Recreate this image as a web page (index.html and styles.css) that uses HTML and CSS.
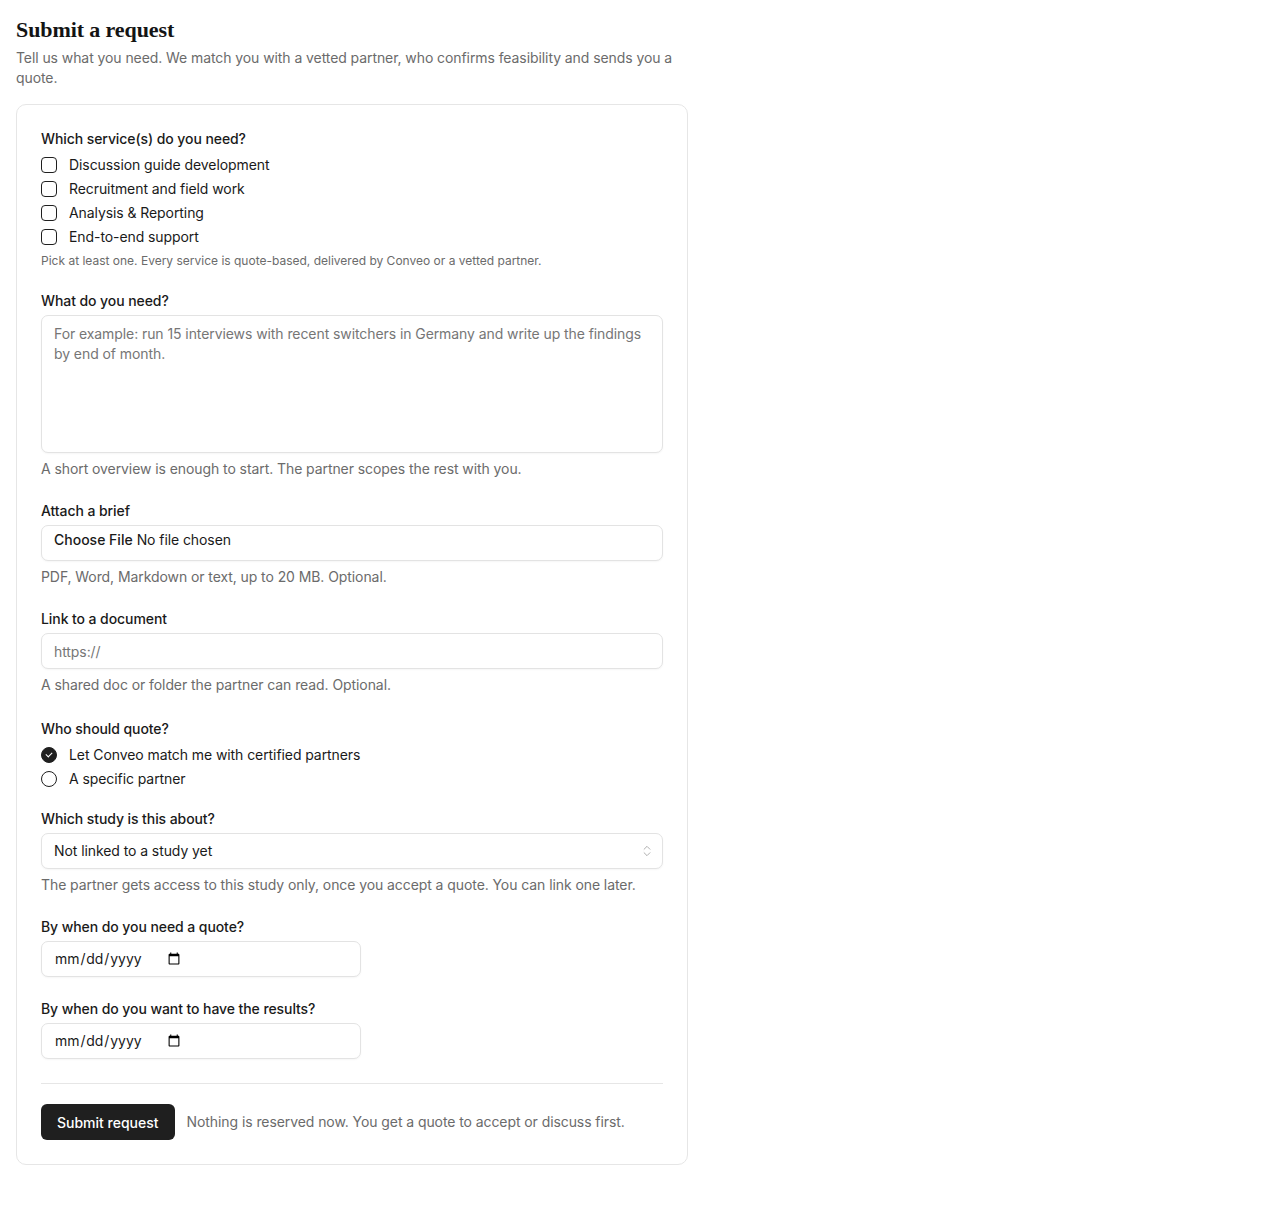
FILE: index.html
```html
<!DOCTYPE html>
<html lang="en">
<head>
<meta charset="utf-8">
<title>Submit a request</title>
<link rel="stylesheet" href="styles.css">
</head>
<body>
<main class="page">
  <h1 class="title">Submit a request</h1>
  <p class="lead">Tell us what you need. We match you with a vetted partner, who confirms feasibility and sends you a quote.</p>

  <form class="card">
    <fieldset class="field field-services">
      <legend class="label">Which service(s) do you need?</legend>
      <div class="options">
        <label class="option"><input type="checkbox" class="box"><span>Discussion guide development</span></label>
        <label class="option"><input type="checkbox" class="box"><span>Recruitment and field work</span></label>
        <label class="option"><input type="checkbox" class="box"><span>Analysis &amp; Reporting</span></label>
        <label class="option"><input type="checkbox" class="box"><span>End-to-end support</span></label>
      </div>
      <p class="hint hint-small">Pick at least one. Every service is quote-based, delivered by Conveo or a vetted partner.</p>
    </fieldset>

    <div class="field">
      <label class="label" for="need">What do you need?</label>
      <textarea id="need" class="control textarea" placeholder="For example: run 15 interviews with recent switchers in Germany and write up the findings by end of month."></textarea>
      <p class="hint">A short overview is enough to start. The partner scopes the rest with you.</p>
    </div>

    <div class="field">
      <label class="label" for="brief">Attach a brief</label>
      <input id="brief" type="file" class="control file">
      <p class="hint">PDF, Word, Markdown or text, up to 20 MB. Optional.</p>
    </div>

    <div class="field field-link">
      <label class="label" for="link">Link to a document</label>
      <input id="link" type="url" class="control" placeholder="https://">
      <p class="hint">A shared doc or folder the partner can read. Optional.</p>
    </div>

    <fieldset class="field field-quote">
      <legend class="label">Who should quote?</legend>
      <div class="options options-radio">
        <label class="option"><input type="radio" name="who" class="radio" checked><span>Let Conveo match me with certified partners</span></label>
        <label class="option"><input type="radio" name="who" class="radio"><span>A specific partner</span></label>
      </div>
    </fieldset>

    <div class="field">
      <label class="label" for="study">Which study is this about?</label>
      <div class="select-wrap">
        <select id="study" class="control select">
          <option>Not linked to a study yet</option>
        </select>
        <svg class="select-icon" width="14" height="14" viewBox="0 0 24 24" fill="none" stroke="currentColor" stroke-width="1.5" stroke-linecap="round" stroke-linejoin="round"><path d="m7 15 5 5 5-5"/><path d="m7 9 5-5 5 5"/></svg>
      </div>
      <p class="hint">The partner gets access to this study only, once you accept a quote. You can link one later.</p>
    </div>

    <div class="field">
      <label class="label" for="qdate">By when do you need a quote?</label>
      <input id="qdate" type="date" class="control date">
    </div>

    <div class="field field-last">
      <label class="label" for="rdate">By when do you want to have the results?</label>
      <input id="rdate" type="date" class="control date">
    </div>

    <div class="actions">
      <button type="button" class="submit">Submit request</button>
      <p class="note">Nothing is reserved now. You get a quote to accept or discuss first.</p>
    </div>
  </form>
</main>
</body>
</html>
```

FILE: styles.css
```css
* { box-sizing: border-box; }

html, body {
  margin: 0;
  padding: 0;
  background: #ffffff;
}

body {
  font-family: Inter, "Noto Sans", "Liberation Sans", sans-serif;
  font-size: 14px;
  line-height: 20px;
  letter-spacing: -0.08px;
  color: #1a1a1a;
}

.page {
  max-width: 704px;
  padding: 16px;
}

.title {
  margin: 0;
  font-family: "Liberation Serif", "DejaVu Serif", serif;
  font-size: 22px;
  line-height: 28px;
  font-weight: 700;
  letter-spacing: -0.1px;
  color: #141414;
}

.lead {
  margin: 4px 0 16px;
  color: #6b6b6b;
  font-size: 14px;
  line-height: 20px;
}

.card {
  border: 1px solid #e6e6e6;
  border-radius: 10px;
  padding: 24px;
  display: flex;
  flex-direction: column;
}

.field {
  border: 0;
  margin: 0 0 22px;
  padding: 0;
  min-width: 0;
  display: flex;
  flex-direction: column;
}

.field-link { margin-bottom: 24px; }
.field-quote { margin-bottom: 18px; }
.field-last { margin-bottom: 24px; }

.label {
  display: block;
  padding: 0;
  font-weight: 500;
  font-size: 14px;
  line-height: 20px;
  color: #1a1a1a;
  margin-bottom: 4px;
}

.options {
  display: flex;
  flex-direction: column;
}

.option {
  display: flex;
  align-items: center;
  gap: 12px;
  height: 24px;
  cursor: pointer;
}

.box, .radio {
  appearance: none;
  -webkit-appearance: none;
  margin: 0;
  width: 16px;
  height: 16px;
  flex: none;
  border: 1.5px solid #1f1f1f;
  background: #fff;
  display: grid;
  place-content: center;
}

.box { border-radius: 4px; }
.radio { border-radius: 50%; }

.radio:checked {
  background: #1f1f1f;
  border-color: #1f1f1f;
}

.radio:checked::before {
  content: "";
  width: 5px;
  height: 3px;
  border-left: 1.5px solid #fff;
  border-bottom: 1.5px solid #fff;
  transform: translateY(-1px) rotate(-45deg);
}

.hint {
  margin: 6px 0 0;
  color: #6b6b6b;
  font-size: 14px;
  line-height: 20px;
}

.hint-small {
  margin-top: 4px;
  font-size: 12px;
  line-height: 16px;
  letter-spacing: 0;
}

.control {
  width: 100%;
  height: 36px;
  margin: 0;
  border: 1px solid #e3e3e3;
  border-radius: 7px;
  background: #fff;
  box-shadow: 0 1px 2px rgba(0, 0, 0, 0.04);
  padding: 0 12px;
  font-family: Inter, "Noto Sans", "Liberation Sans", sans-serif;
  font-size: 14px;
  line-height: 20px;
  letter-spacing: -0.08px;
  color: #1a1a1a;
  outline: none;
}

.control::placeholder { color: #767676; }

.textarea {
  height: 138px;
  padding: 8px 12px;
  resize: none;
  display: block;
}

.file {
  padding: 4px 12px;
  line-height: 20px;
}

.file::file-selector-button {
  border: 0;
  background: transparent;
  padding: 0;
  margin-right: 4px;
  font-family: inherit;
  font-size: 14px;
  font-weight: 500;
  color: #1a1a1a;
}

.select-wrap {
  position: relative;
}

.select {
  appearance: none;
  -webkit-appearance: none;
  display: block;
  padding-right: 32px;
}

.select-icon {
  position: absolute;
  right: 9px;
  top: 11px;
  color: #a3a3a3;
  pointer-events: none;
}

.date {
  width: 320px;
  display: flex;
  justify-content: flex-start;
}

.date::-webkit-datetime-edit {
  flex: 0 0 auto;
}

.date::-webkit-calendar-picker-indicator {
  margin-left: 4px;
}

.actions {
  border-top: 1px solid #e6e6e6;
  padding-top: 20px;
  display: flex;
  align-items: center;
  gap: 12px;
}

.submit {
  height: 36px;
  padding: 0 16px;
  border: 0;
  border-radius: 6px;
  background: #1f1f1f;
  color: #fff;
  font-family: inherit;
  font-size: 14px;
  font-weight: 500;
  cursor: pointer;
}

.note {
  margin: 0;
  color: #6b6b6b;
  font-size: 14px;
  line-height: 20px;
}
```
